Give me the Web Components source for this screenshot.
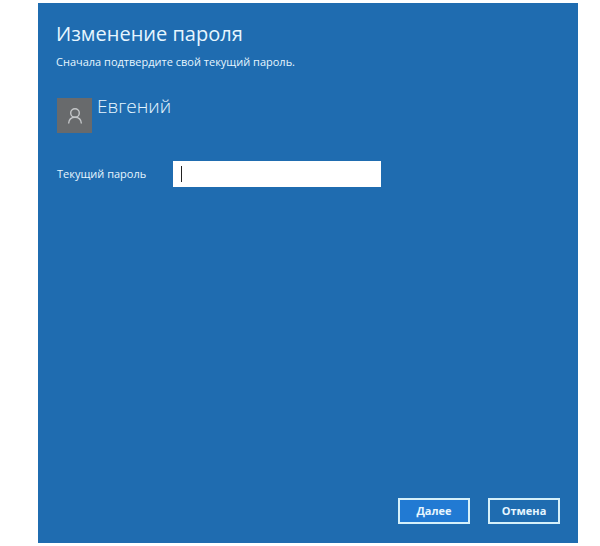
<!DOCTYPE html>
<html lang="ru">
<head>
<meta charset="utf-8">
<meta name="viewport" content="width=device-width, initial-scale=1">
<title>Изменение пароля</title>
<style>
    html, body {
        height: 100%;
        margin: 0;
    }

    body {
        box-sizing: border-box;
        padding: 3px 22px 3px 38px;
        background: #fff;
        color: #e6f6ff;
        font-family: "Segoe UI", "Open Sans", "Noto Sans", sans-serif;
        font-size: 11px;
    }
</style>
</head>
<body>
<password-dialog>
    <span slot="title">Изменение пароля</span>
    <span slot="hint">Сначала подтвердите свой текущий пароль.</span>
    <user-tile name="Евгений"></user-tile>
    <password-field label="Текущий пароль"></password-field>
    <dialog-button slot="actions" primary>Далее</dialog-button>
    <dialog-button slot="actions">Отмена</dialog-button>
</password-dialog>

<script>
function makeTemplate(html) {
    const template = document.createElement('template')
    template.innerHTML = html
    return template
}

const dialogTemplate = makeTemplate(`
    <style>
        :host {
            display: flex;
            flex-direction: column;
            box-sizing: border-box;
            min-height: 100%;
            padding: 17px 18px 19px;
            background: #1f6cb0;
        }

        h1 {
            margin: 0;
            font-size: 20px;
            font-weight: 400;
            line-height: 28px;
        }

        p {
            margin: 4px 0 0;
            line-height: 20px;
        }

        main {
            display: flex;
            flex: 1;
            flex-direction: column;
            gap: 28px;
            padding: 26px 0 0 1px;
        }

        footer {
            display: flex;
            justify-content: flex-end;
            gap: 18px;
        }
    </style>

    <h1><slot name="title"></slot></h1>
    <p><slot name="hint"></slot></p>
    <main><slot></slot></main>
    <footer><slot name="actions"></slot></footer>
`)

const userTemplate = makeTemplate(`
    <style>
        :host {
            display: flex;
            gap: 5px;
        }

        .avatar {
            display: grid;
            place-items: center;
            width: 35px;
            height: 35px;
            background: #686a6c;
        }

        h2 {
            margin: 0;
            font-size: 19px;
            font-weight: 300;
            line-height: 16px;
        }
    </style>

    <div class="avatar">
        <svg width="16" height="18" viewBox="0 0 16 18" fill="none" stroke="#c4c6c8" stroke-width="1.4" aria-hidden="true">
            <circle cx="8" cy="6" r="4.3" />
            <path d="M1.6 16.5C1.9 12.7 4.5 10.3 8 10.3S14.1 12.7 14.4 16.5" />
        </svg>
    </div>
    <h2></h2>
`)

const fieldTemplate = makeTemplate(`
    <style>
        :host {
            display: flex;
            align-items: center;
        }

        label {
            width: 116px;
            line-height: 20px;
        }

        .box {
            position: relative;
            flex: 0 1 208px;
        }

        input {
            display: block;
            box-sizing: border-box;
            width: 100%;
            height: 26px;
            margin: 0;
            padding: 0 8px;
            border: 0;
            border-radius: 0;
            outline: 0;
            background: #fff;
            color: #222;
            font: inherit;
        }

        /* resting caret, gives way to the native one on focus */
        .caret {
            position: absolute;
            top: 5px;
            left: 8px;
            width: 1px;
            height: 16px;
            background: #222;
            pointer-events: none;
        }

        .box:focus-within .caret {
            display: none;
        }
    </style>

    <label for="password"></label>
    <div class="box">
        <input type="password" id="password">
        <span class="caret"></span>
    </div>
`)

const buttonTemplate = makeTemplate(`
    <style>
        :host {
            display: block;
        }

        button {
            display: block;
            box-sizing: border-box;
            width: 72px;
            height: 26px;
            margin: 0;
            padding: 0;
            border: 2px solid #d5f0fa;
            border-radius: 0;
            background: transparent;
            color: inherit;
            font: inherit;
            font-weight: 700;
            line-height: 20px;
        }

        :host([primary]) button {
            background: #217ad3;
        }
    </style>

    <button type="button"><slot></slot></button>
`)

class PasswordDialog extends HTMLElement {
    constructor() {
        super()
        this.attachShadow({ mode: 'open' })
        this.shadowRoot.appendChild(dialogTemplate.content.cloneNode(true))
    }
}

class UserTile extends HTMLElement {
    constructor() {
        super()
        this.attachShadow({ mode: 'open' })
        this.shadowRoot.appendChild(userTemplate.content.cloneNode(true))
    }

    connectedCallback() {
        this.shadowRoot.querySelector('h2').textContent = this.getAttribute('name')
    }
}

class PasswordField extends HTMLElement {
    constructor() {
        super()
        this.attachShadow({ mode: 'open' })
        this.shadowRoot.appendChild(fieldTemplate.content.cloneNode(true))
    }

    connectedCallback() {
        this.shadowRoot.querySelector('label').textContent = this.getAttribute('label')
    }
}

class DialogButton extends HTMLElement {
    constructor() {
        super()
        this.attachShadow({ mode: 'open' })
        this.shadowRoot.appendChild(buttonTemplate.content.cloneNode(true))
    }
}

window.customElements.define('password-dialog', PasswordDialog)
window.customElements.define('user-tile', UserTile)
window.customElements.define('password-field', PasswordField)
window.customElements.define('dialog-button', DialogButton)
</script>
</body>
</html>
